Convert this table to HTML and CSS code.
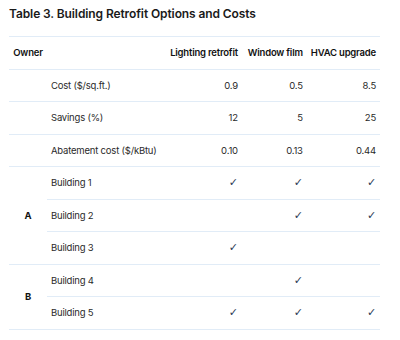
FILE: index.html
```html
<!DOCTYPE html>
<html>
<head>
<meta charset="utf-8">
<link rel="stylesheet" href="styles.css">
</head>
<body>
<h1 class="title">Table 3. Building Retrofit Options and Costs</h1>
<table class="tbl">
  <colgroup>
    <col class="c-owner"><col class="c-desc"><col class="c-1"><col class="c-2"><col class="c-3">
  </colgroup>
  <thead>
    <tr><th class="owner">Owner</th><th></th><th class="num">Lighting retrofit</th><th class="num">Window film</th><th class="num">HVAC upgrade</th></tr>
  </thead>
  <tbody>
    <tr><td></td><td>Cost ($/sq.ft.)</td><td class="num">0.9</td><td class="num">0.5</td><td class="num">8.5</td></tr>
    <tr><td></td><td>Savings (%)</td><td class="num">12</td><td class="num">5</td><td class="num">25</td></tr>
    <tr><td></td><td>Abatement cost ($/kBtu)</td><td class="num">0.10</td><td class="num">0.13</td><td class="num">0.44</td></tr>
    <tr><td class="owner grp" rowspan="3">A</td><td>Building 1</td><td class="num chk">✓</td><td class="num chk">✓</td><td class="num chk">✓</td></tr>
    <tr><td>Building 2</td><td class="num"></td><td class="num chk">✓</td><td class="num chk">✓</td></tr>
    <tr><td>Building 3</td><td class="num chk">✓</td><td class="num"></td><td class="num"></td></tr>
    <tr><td class="owner grp" rowspan="2">B</td><td>Building 4</td><td class="num"></td><td class="num chk">✓</td><td class="num"></td></tr>
    <tr><td>Building 5</td><td class="num chk">✓</td><td class="num chk">✓</td><td class="num chk">✓</td></tr>
  </tbody>
</table>
</body>
</html>
```
FILE: styles.css
```css
html, body {
  margin: 0;
  padding: 0;
  background: #ffffff;
}
body {
  font-family: Inter, "Liberation Sans", sans-serif;
  color: #1c1c1c;
  padding: 6px 9px 0 9px;
}
.title {
  margin: 0;
  font-size: 12px;
  font-weight: 600;
  line-height: 16px;
  color: #1a1a1a;
  letter-spacing: -0.1px;
}
.tbl {
  margin-top: 14px;
  width: 371px;
  border-collapse: collapse;
  border-top: 1px solid #e1ecf7;
  font-size: 9.5px;
}
.c-owner { width: 38px; }
.c-desc { width: 114px; }
.c-1 { width: 81px; }
.c-2 { width: 65px; }
.c-3 { width: 73px; }
.tbl th, .tbl td {
  height: 31.5px;
  padding: 0 4px 0 4px;
  border-bottom: 1px solid #e1ecf7;
  text-align: left;
  vertical-align: middle;
  white-space: nowrap;
}
.tbl th {
  font-weight: 600;
  color: #111;
  letter-spacing: -0.2px;
}
.tbl td {
  color: #2a2a2a;
  letter-spacing: -0.2px;
}
.tbl .owner {
  text-align: center;
}
.tbl .grp {
  font-weight: 700;
  color: #111;
}
.tbl .num {
  text-align: right;
}
.tbl .chk {
  font-family: "DejaVu Sans", sans-serif;
  font-size: 11px;
  color: #2b3a55;
}
```
